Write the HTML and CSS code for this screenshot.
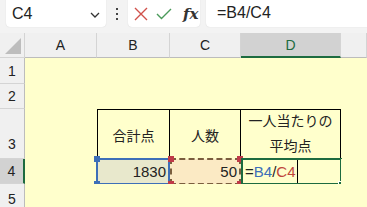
FILE: index.html
```html
<!DOCTYPE html>
<html lang="ja">
<head>
  <meta charset="UTF-8">
  <meta name="viewport" content="width=device-width, initial-scale=1.0">
  <link rel="stylesheet" href="styles.css">
  <title>Excel</title>
</head>
<body>
  <div class="toolbar">
    <div class="namebox">
      <span>C4</span>
      <svg class="chevron" width="10" height="6" viewBox="0 0 10 6"><path d="M1 1 L5 5 L9 1" fill="none" stroke="#333" stroke-width="1.3"/></svg>
    </div>
    <div class="dots"><i></i><i></i><i></i></div>
    <div class="fxbox">
      <svg width="14" height="14" viewBox="0 0 14 14"><path d="M1 1 L13 13 M13 1 L1 13" stroke="#d0514b" stroke-width="1.4" fill="none"/></svg>
      <svg width="16" height="12" viewBox="0 0 16 12"><path d="M1 6 L5.5 10.5 L15 1" stroke="#4a9a5a" stroke-width="1.4" fill="none"/></svg>
      <span class="fx">fx</span>
    </div>
    <div class="formula">=B4/C4</div>
  </div>

  <div class="sheet">
    <div class="corner"><span class="tri"></span></div>
    <div class="colhead">A</div>
    <div class="colhead">B</div>
    <div class="colhead">C</div>
    <div class="colhead active">D</div>
    <div class="colhead"></div>

    <div class="rowhead">1</div>
    <div class="cell"></div><div class="cell"></div><div class="cell"></div><div class="cell"></div><div class="cell"></div>

    <div class="rowhead">2</div>
    <div class="cell"></div><div class="cell"></div><div class="cell"></div><div class="cell"></div><div class="cell"></div>

    <div class="rowhead tall">3</div>
    <div class="cell"></div>
    <div class="cell th first">合計点</div>
    <div class="cell th">人数</div>
    <div class="cell th wrap">一人当たりの<br>平均点</div>
    <div class="cell"></div>

    <div class="rowhead active">4</div>
    <div class="cell"></div>
    <div class="cell num ref-b">1830
      <span class="sel sel-blue"><b class="sq tl"></b><b class="sq bl"></b></span>
    </div>
    <div class="cell num ref-c">50
      <span class="sel sel-dash"><b class="sq tl"></b><b class="sq tr"></b><b class="sq bl"></b><b class="sq br"></b></span>
    </div>
    <div class="cell edit">=<span class="blue">B4</span>/<span class="red">C4</span><span class="caret"></span>
      <span class="sel sel-green"><b class="sq handle"></b></span>
    </div>
    <div class="cell"></div>

    <div class="rowhead">5</div>
    <div class="cell"></div><div class="cell"></div><div class="cell"></div><div class="cell"></div><div class="cell"></div>
  </div>
</body>
</html>
```

FILE: styles.css
```css
* {
  box-sizing: border-box;
}

html, body {
  margin: 0;
  width: 367px;
  height: 207px;
  overflow: hidden;
  background-color: #f3f3f3;
  font-family: "Liberation Sans", "Noto Sans CJK JP", sans-serif;
}

.toolbar {
  display: flex;
  align-items: flex-start;
  height: 33px;
  padding-left: 6px;
}

.namebox {
  width: 100px;
  height: 27px;
  background-color: #fff;
  border-radius: 0 0 4px 4px;
  box-shadow: 0 0 1px #c8c8c8;
  display: flex;
  align-items: center;
  justify-content: space-between;
  padding: 0 6px 0 6px;
  font-size: 16px;
  color: #222;
}

.chevron {
  margin-top: 2px;
}

.dots {
  width: 22px;
  height: 27px;
  display: flex;
  flex-direction: column;
  align-items: center;
  justify-content: center;
  gap: 3px;
}

.dots i {
  width: 2px;
  height: 2px;
  background-color: #444;
}

.fxbox {
  width: 72px;
  height: 27px;
  background-color: #fff;
  border-radius: 0 0 4px 4px;
  box-shadow: 0 0 1px #c8c8c8;
  display: flex;
  align-items: center;
  gap: 8px;
  padding-left: 6px;
}

.fx {
  font-family: "DejaVu Serif", serif;
  font-style: italic;
  font-weight: bold;
  font-size: 15px;
  color: #333;
  margin-left: 3px;
}

.formula {
  flex: 1;
  height: 27px;
  margin-left: 6px;
  background-color: #fff;
  border-radius: 0 0 0 4px;
  box-shadow: 0 0 1px #c8c8c8;
  font-size: 16px;
  line-height: 26px;
  padding-left: 11px;
  color: #222;
}

.sheet {
  display: grid;
  grid-template-columns: 25px 72px 73px 71px 100px 26px;
  grid-template-rows: 25px 26px 25px 50px 25px 30px;
}

.corner {
  background-color: #f0f0f0;
  border-right: 1px solid #d4d4d4;
  border-bottom: 1px solid #d4d4d4;
  position: relative;
}

.tri {
  position: absolute;
  right: 3px;
  bottom: 3px;
  width: 0;
  height: 0;
  border-left: 16px solid transparent;
  border-bottom: 16px solid #bdbdbd;
}

.colhead {
  background-color: #f0f0f0;
  border-right: 1px solid #d4d4d4;
  border-bottom: 1px solid #bcbcbc;
  text-align: center;
  font-size: 14px;
  line-height: 24px;
  color: #222;
}

.colhead.active {
  background-color: #d2d2d2;
  color: #1d6b3f;
  border-bottom: 2px solid #1d6b3f;
}

.rowhead {
  background-color: #f0f0f0;
  border-right: 1px solid #bcbcbc;
  border-bottom: 1px solid #d4d4d4;
  text-align: center;
  font-size: 14px;
  line-height: 24px;
  color: #222;
  display: flex;
  align-items: center;
  justify-content: center;
}

.rowhead.tall {
  align-items: flex-end;
  padding-bottom: 2px;
}

.rowhead.active {
  background-color: #d2d2d2;
  border-right: 2px solid #1d6b3f;
}

.cell {
  background-color: #ffffcc;
  position: relative;
  font-size: 14px;
  color: #222;
}

.th {
  border-top: 1px solid #000;
  border-right: 1px solid #000;
  display: flex;
  align-items: center;
  justify-content: center;
  text-align: center;
}

.th.first {
  border-left: 1px solid #000;
}

.th.wrap {
  line-height: 25px;
  padding-bottom: 2px;
}

.num {
  text-align: right;
  line-height: 25px;
  padding-right: 4px;
  font-size: 15px;
}

.ref-b {
  background-color: #e8e8cc;
}

.ref-c {
  background-color: #fbeac4;
}

.edit {
  font-size: 15px;
  line-height: 25px;
  padding-left: 4px;
  display: flex;
  align-items: center;
}

.blue {
  color: #3d6fb8;
}

.red {
  color: #c0463c;
}

.caret {
  width: 1px;
  height: 23px;
  background-color: #000;
  margin-left: 2px;
}

.sel {
  position: absolute;
  top: -1px;
  left: -1px;
  right: -1px;
  bottom: -1px;
}

.sel-blue {
  border: 2px solid #3d6fb8;
  right: 0;
}

.sel-dash {
  border: 2px dashed #7a5e3e;
  left: 0;
  right: 0;
}

.sel-green {
  border: 2px solid #1d6b3f;
  left: 0;
}

.sq {
  position: absolute;
  width: 6px;
  height: 6px;
}

.sel-blue .sq {
  background-color: #3d6fb8;
}

.sel-dash .sq {
  background-color: #c03a48;
}

.tl { top: -4px; left: -4px; }
.tr { top: -4px; right: -4px; }
.bl { bottom: -4px; left: -4px; }
.br { bottom: -4px; right: -4px; }

.handle {
  right: -4px;
  bottom: -4px;
  background-color: #1d6b3f;
  border: 1px solid #fff;
}
```
